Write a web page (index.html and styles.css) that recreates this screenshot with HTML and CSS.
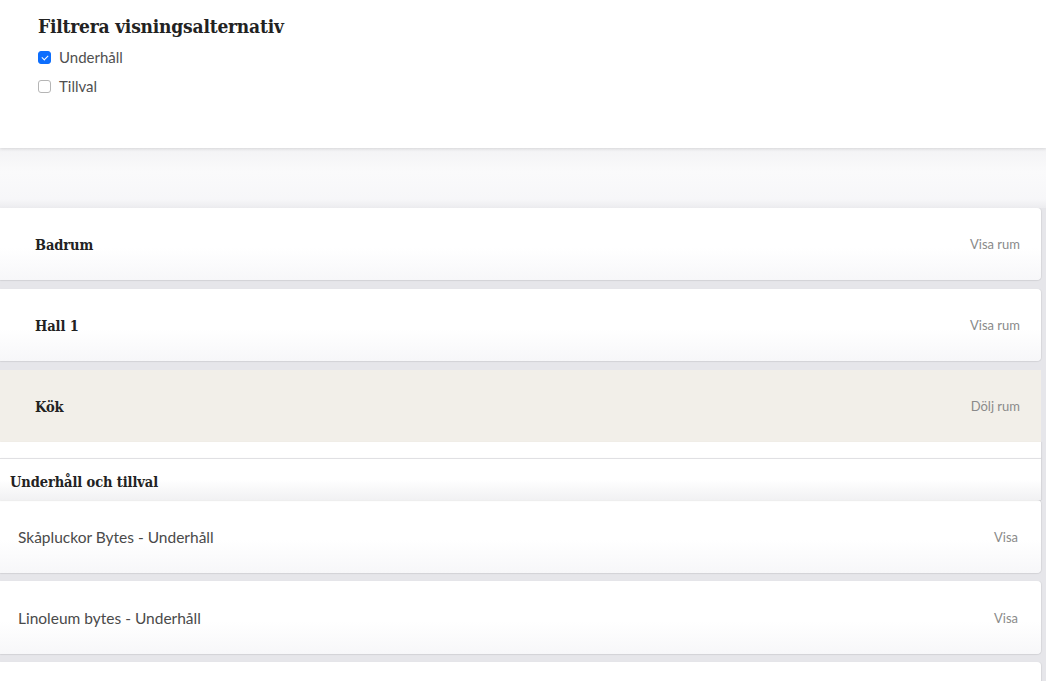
FILE: index.html
```html
<!DOCTYPE html>
<html lang="sv">
<head>
<meta charset="utf-8">
<title>Rum</title>
<link rel="stylesheet" href="styles.css">
</head>
<body>
<section class="filter">
  <h2 class="filter-title">Filtrera visningsalternativ</h2>
  <label class="check-row"><input type="checkbox" class="check" checked><span>Underhåll</span></label>
  <label class="check-row"><input type="checkbox" class="check"><span>Tillval</span></label>
</section>
<div class="spacer"></div>
<main class="rooms">
  <div class="card room">
    <span class="room-name">Badrum</span>
    <span class="action">Visa rum</span>
  </div>
  <div class="card room">
    <span class="room-name">Hall 1</span>
    <span class="action">Visa rum</span>
  </div>
  <div class="room-open">
    <div class="card room active">
      <span class="room-name">Kök</span>
      <span class="action">Dölj rum</span>
    </div>
    <div class="room-gap"></div>
    <div class="section-head">Underhåll och tillval</div>
    <div class="items">
      <div class="card item">
        <span class="item-name">Skåpluckor Bytes - Underhåll</span>
        <span class="action">Visa</span>
      </div>
      <div class="card item">
        <span class="item-name">Linoleum bytes - Underhåll</span>
        <span class="action">Visa</span>
      </div>
      <div class="card item">
        <span class="item-name"></span>
        <span class="action"></span>
      </div>
    </div>
  </div>
</main>
</body>
</html>
```

FILE: styles.css
```css
* { box-sizing: border-box; }
html, body {
  margin: 0;
  padding: 0;
  height: 100%;
  overflow: hidden;
}
body {
  background: #e6e6ea;
  font-family: Lato, "Open Sans", sans-serif;
  color: #4a4a4a;
}
.filter {
  background: #fff;
  height: 148px;
  padding: 13px 38px 0;
  position: relative;
  z-index: 2;
  box-shadow: 0 1px 3px rgba(0,0,0,0.12);
}
.filter-title,
.room-name,
.section-head {
  font-family: "DejaVu Serif Condensed", "DejaVu Serif", serif;
  font-stretch: semi-condensed;
  font-weight: bold;
  color: #222;
}
.filter-title {
  margin: 0 0 3px;
  font-size: 19px;
  letter-spacing: -0.2px;
  line-height: 26px;
}
.check-row {
  display: flex;
  align-items: center;
  gap: 8px;
  height: 29px;
  font-size: 15px;
  color: #505050;
}
.check {
  appearance: none;
  -webkit-appearance: none;
  margin: 2px 0 0;
  width: 13px;
  height: 13px;
  border: 1px solid #b5b5b5;
  border-radius: 3px;
  background: #fff;
  display: grid;
  place-items: center;
}
.check:checked {
  background: #0d6efd;
  border-color: #0d6efd;
}
.check:checked::after {
  content: "";
  width: 5px;
  height: 3px;
  border-left: 1.6px solid #fff;
  border-bottom: 1.6px solid #fff;
  transform: translateY(-1px) rotate(-45deg);
}
.spacer {
  height: 60px;
  background: linear-gradient(#f3f3f5, #fafafb 40%, #f7f7f9 85%, #ececef);
}
.rooms {
  display: flex;
  flex-direction: column;
  gap: 9px;
  padding-right: 5px;
}
.card {
  display: flex;
  align-items: center;
  justify-content: space-between;
  height: 72px;
  background: linear-gradient(#ffffff 0%, #ffffff 55%, #f7f7f9 100%);
  border-radius: 0 4px 4px 0;
  box-shadow: 0 1px 1px rgba(0,0,0,0.08), 1px 0 1px rgba(0,0,0,0.06);
}
.room {
  padding: 0 21px 0 35px;
}
.room-name {
  font-size: 14.5px;
  letter-spacing: -0.1px;
}
.action {
  font-size: 13px;
  color: #8a8a8a;
}
.room.active {
  background: #f2efe9;
  border-radius: 0;
  box-shadow: none;
}
.room-open {
  display: flex;
  flex-direction: column;
  background: #e6e6ea;
}
.room-gap {
  height: 16px;
  background: #fff;
  box-shadow: 1px 0 1px rgba(0,0,0,0.06);
}
.section-head {
  height: 42px;
  display: flex;
  align-items: center;
  padding: 4px 10px 0;
  border-top: 1px solid #e0e0e3;
  background: linear-gradient(#fff 0%, #fff 50%, #f1f1f3 100%);
  font-size: 14.5px;
  letter-spacing: -0.1px;
  box-shadow: 0 1px 1px rgba(0,0,0,0.06), 1px 0 1px rgba(0,0,0,0.06);
  position: relative;
  z-index: 1;
}
.items {
  display: flex;
  flex-direction: column;
  gap: 8px;
}
.item {
  height: 73px;
  padding: 0 23px 0 18px;
}
.item-name {
  font-size: 15.5px;
  color: #4a4a4a;
}
```
